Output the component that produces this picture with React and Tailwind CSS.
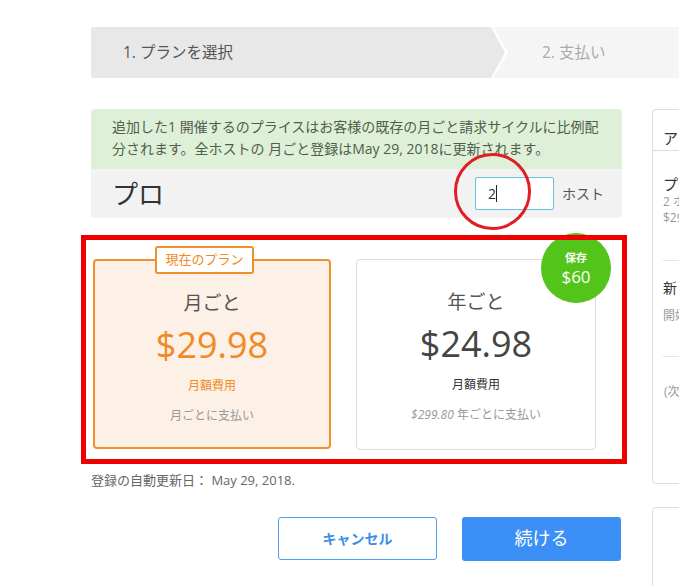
import React from "react";

const font = "font-['Open_Sans','Noto_Sans_CJK_JP',sans-serif]";

const Stepper = () => (
  <div className="flex h-[51px] w-[640px] bg-[#f5f5f5] rounded-[2px]">
    <div className="flex items-center w-[399px] bg-[#e8e8e8] rounded-l-[2px] pl-[32px] text-[15.5px] text-[#555]">
      1. プランを選択
    </div>
    <svg width="20" height="51" viewBox="0 0 20 51" className="shrink-0">
      <polygon points="0,0 3,0 18,25.5 3,51 0,51" fill="#ffffff" />
      <polygon points="0,0 1,0 15,25.5 1,51 0,51" fill="#e8e8e8" />
    </svg>
    <div className="flex items-center pl-[32px] text-[15.5px] text-[#aaa]">2. 支払い</div>
  </div>
);

const PlanCard = ({ current, title, price, perMonth, note, save }) => (
  <div
    className={
      current
        ? "relative w-[238px] h-[190px] rounded-[4px] border-2 border-[#f0902c] bg-[#fdf0e6] flex flex-col items-center"
        : "relative w-[240px] h-[191px] rounded-[4px] border border-[#dcdcdc] bg-white flex flex-col items-center"
    }
  >
    {current && (
      <div className="absolute left-[60px] top-[-15px] h-[28px] w-[99px] flex items-center justify-center bg-white border-2 border-[#f0902c] rounded-[3px] text-[13px] text-[#f08a24]">
        現在のプラン
      </div>
    )}
    {save && (
      <div className="absolute left-[184px] top-[-27px] w-[70px] h-[70px] rounded-full bg-[#52c41a] flex flex-col items-center justify-center text-white leading-none">
        <span className="text-[11px] font-semibold">保存</span>
        <span className="text-[17px] mt-[5px]">{save}</span>
      </div>
    )}
    <div className="mt-[33px] text-[19px] text-[#555] leading-none">{title}</div>
    <div className={current ? "mt-[14px] text-[36px] leading-none text-[#f08a24]" : "mt-[14px] text-[36px] leading-none text-[#444]"}>
      {price}
    </div>
    <div className={current ? "mt-[17px] text-[12px] leading-none text-[#f08a24]" : "mt-[17px] text-[12px] leading-none text-[#333]"}>
      {perMonth}
    </div>
    <div className="mt-[18px] text-[12px] leading-none text-[#999]">{note}</div>
  </div>
);

export default function App() {
  return (
    <div className={`w-[679px] h-[586px] overflow-hidden bg-white pl-[91px] pt-[27px] ${font}`}>
      <Stepper />

      <div className="flex mt-[31px] gap-[30px]">
        {/* main column */}
        <div className="relative w-[531px] shrink-0">
          <div className="h-[60px] bg-[#dff0d8] rounded-t-[4px] pl-[21px] pt-[7px] text-[14px] leading-[22px] text-[#4f5f4a] whitespace-nowrap">
            <div>追加した1 開催するのプライスはお客様の既存の月ごと請求サイクルに比例配</div>
            <div>分されます。全ホストの 月ごと登録はMay 29, 2018に更新されます。</div>
          </div>
          <div className="h-[49px] bg-[#f2f2f2] rounded-b-[4px] flex items-center pl-[21px] pr-[18px]">
            <div className="text-[26px] text-[#333] leading-none">プロ</div>
            <div className="ml-auto flex items-center">
              <div className="w-[79px] h-[33px] border border-[#66c3e0] rounded-[2px] bg-white flex items-center pl-[12px] text-[14px] text-[#333]">
                2<span className="inline-block w-px h-[17px] bg-[#222]" />
              </div>
              <div className="ml-[8px] text-[14px] text-[#555]">ホスト</div>
            </div>
          </div>

          <div className="mt-[41px] ml-[2px] flex gap-[25px]">
            <PlanCard current title="月ごと" price="$29.98" perMonth="月額費用" note="月ごとに支払い" />
            <PlanCard
              title="年ごと"
              price="$24.98"
              perMonth="月額費用"
              save="$60"
              note={
                <span>
                  <i>$299.80</i> 年ごとに支払い
                </span>
              }
            />
          </div>

          <div className="mt-[21px] text-[13px] text-[#666]">登録の自動更新日： May 29, 2018.</div>

          <div className="mt-[26px] flex justify-end gap-[25px] pr-[1px]">
            <button className="w-[159px] h-[43px] rounded-[3px] border border-[#4a9ff5] bg-white text-[14px] font-semibold text-[#3a8ee6]">
              キャンセル
            </button>
            <button className="w-[159px] h-[44px] rounded-[3px] bg-[#3b8ff5] text-[18px] text-white">続ける</button>
          </div>

          {/* annotations */}
          <div className="absolute left-[-10px] top-[126px] w-[546px] h-[229px] border-[5px] border-[#ee0000] pointer-events-none" />
          <div className="absolute left-[363px] top-[44px] w-[77px] h-[77px] rounded-full border-[3px] border-[#e31b23] pointer-events-none" />
        </div>

        {/* sidebar */}
        <div className="w-[260px] shrink-0">
          <div className="h-[375px] border border-[#dddddd] rounded-[4px] bg-white">
            <div className="h-[41px] border-b border-[#dddddd] pl-[10px] pt-[21px] text-[15px] leading-none text-[#333]">アップグレード</div>
            <div className="pl-[10px] pt-[26px]">
              <div className="text-[15px] leading-none text-[#333]">プロ</div>
              <div className="mt-[2px] text-[12px] leading-[16px] text-[#999]">2 ホスト</div>
              <div className="text-[12px] leading-[16px] text-[#999]">$29.98 / 月ごと</div>
            </div>
            <div className="ml-[10px] mt-[34px] border-t border-[#e5e5e5]" />
            <div className="pl-[10px] pt-[20px] text-[14px] leading-none text-[#333]">新しい合計</div>
            <div className="pl-[10px] pt-[15px] text-[12px] leading-none text-[#999]">開始日</div>
            <div className="ml-[10px] mt-[34px] border-t border-[#e5e5e5]" />
            <div className="pl-[11px] pt-[29px] text-[12px] leading-none text-[#999]">(次回の請求日)</div>
          </div>
          <div className="mt-[23px] h-[120px] border border-[#dddddd] rounded-[4px] bg-white" />
        </div>
      </div>
    </div>
  );
}
